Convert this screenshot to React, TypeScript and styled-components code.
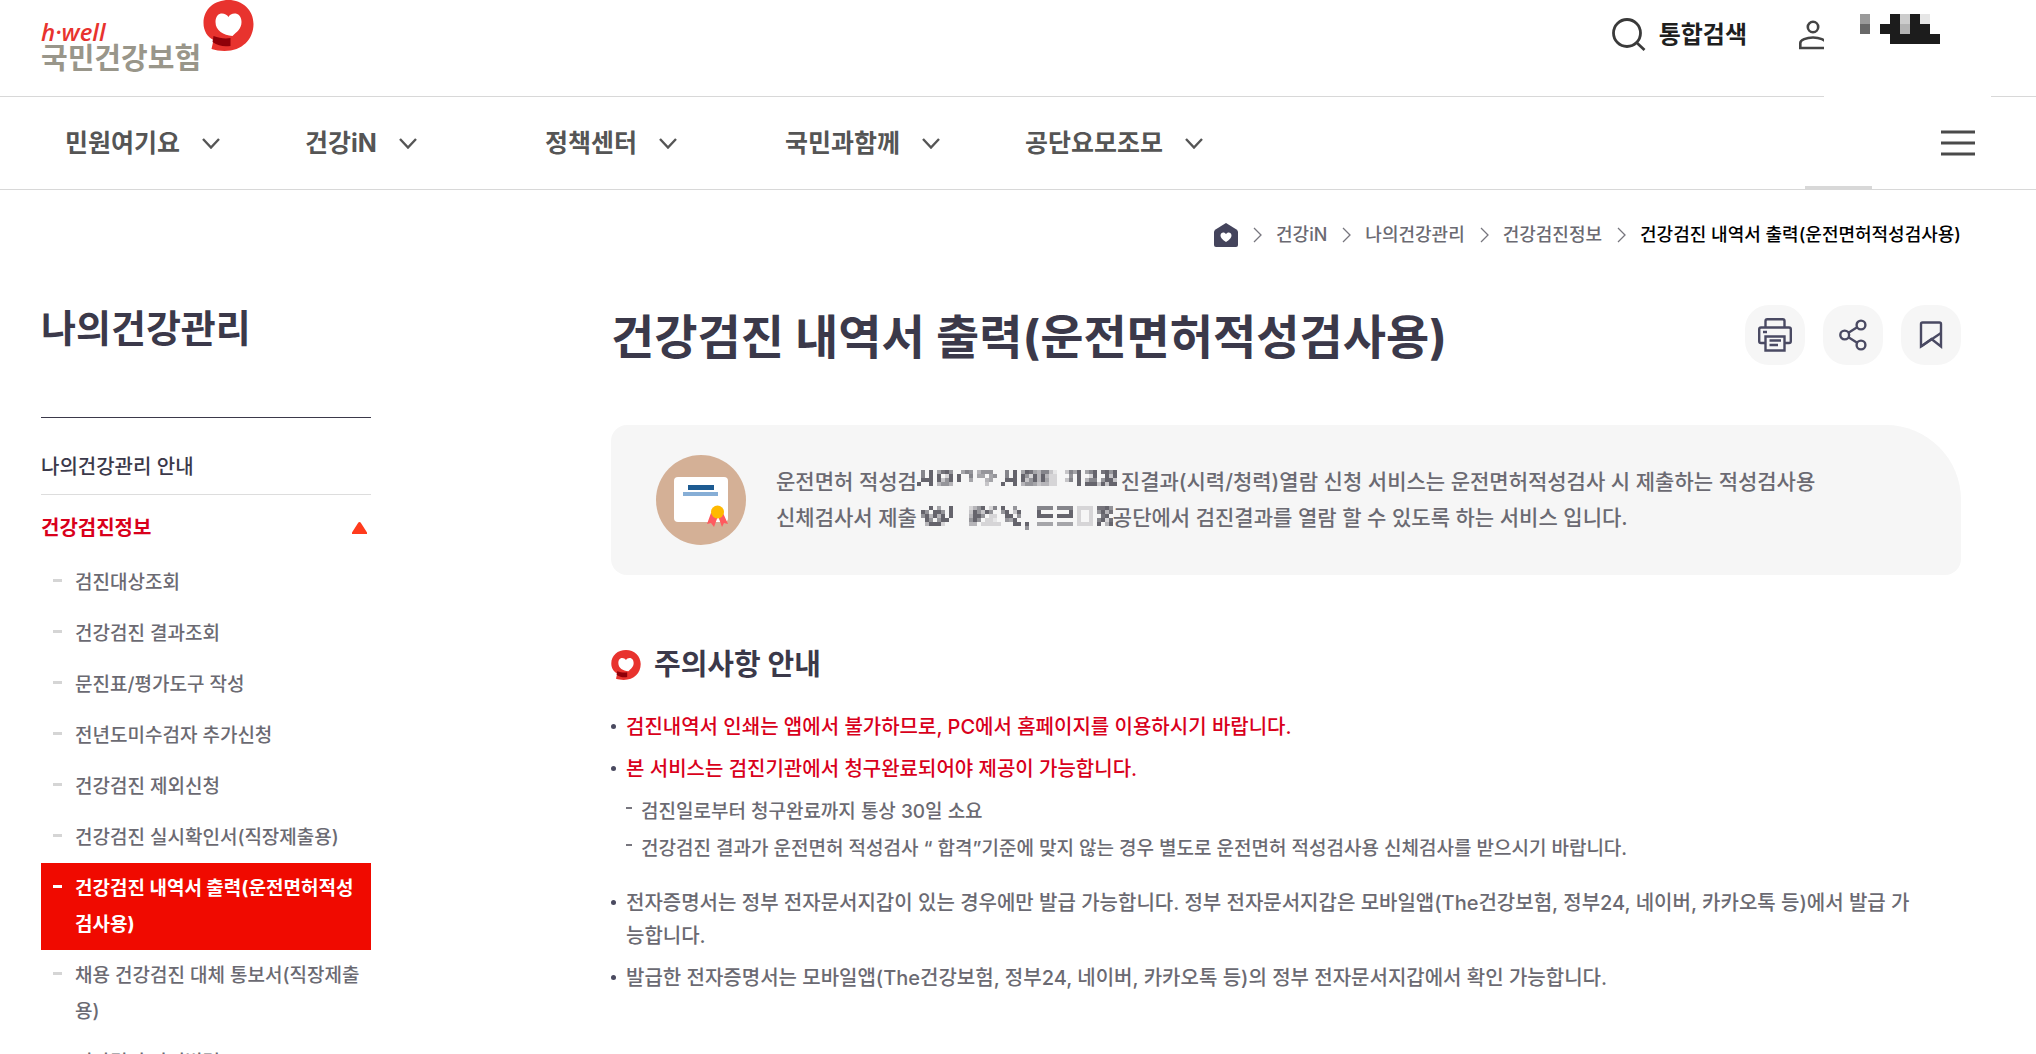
import React from 'react';
import styled, { createGlobalStyle } from 'styled-components';

const GlobalStyle = createGlobalStyle`
  html { scrollbar-width: none; }
  *, *::before, *::after { box-sizing: border-box; }
  body {
    margin: 0;
    background: #fff;
    color: #6b6a72;
    font-family: Inter, "Noto Sans CJK KR", sans-serif;
    font-weight: 500;
  }
  h1, h2, h3, p, ul, ol { margin: 0; padding: 0; font-weight: inherit; }
  ul, ol { list-style: none; }
  a { color: inherit; text-decoration: none; }
  button { font: inherit; color: inherit; padding: 0; border: 0; background: none; cursor: pointer; }
  svg { display: block; flex: none; }
`;

/* ---------- header ---------- */

const Header = styled.header`
  position: relative;
`;

const TopBar = styled.div`
  display: flex;
  justify-content: space-between;
  align-items: flex-start;
  height: 97px;
  padding: 0 209px 0 41px;
  border-bottom: 1px solid #d8d8d8;
`;

const LogoLink = styled.a`
  display: flex;
  align-items: flex-start;
  gap: 2px;
`;

const LogoWords = styled.span`
  display: flex;
  flex-direction: column;
  padding-top: 20px;
`;

const LogoTag = styled.span`
  font: italic 600 24px/24px "Open Sans", sans-serif;
  color: #e8332e;
`;

const LogoName = styled.span`
  font-size: 29px;
  line-height: 29px;
  font-weight: 700;
  color: #99968a;
`;

const Tools = styled.div`
  display: flex;
  align-items: center;
  gap: 52px;
  height: 69px;
`;

const ToolButton = styled.button`
  display: flex;
  align-items: center;
  gap: 13px;
  font-size: 24px;
  line-height: 36px;
  font-weight: 700;
  color: #1f1f1f;
`;

const UserCover = styled.div`
  position: absolute;
  top: 0;
  right: 45px;
  width: 167px;
  height: 100px;
  padding: 14px 0 0 36px;
  background: #fff;
`;

const NavBar = styled.nav`
  display: flex;
  align-items: center;
  justify-content: space-between;
  height: 93px;
  padding: 0 61px 0 65px;
  border-bottom: 1px solid #d8d8d8;
`;

const NavList = styled.ul`
  display: flex;
`;

const NavItem = styled.li`
  width: 240px;
`;

const NavButton = styled.button`
  display: flex;
  align-items: center;
  gap: 22px;
  font-size: 25px;
  line-height: 36px;
  font-weight: 700;
  color: #555;
`;

const NavThumb = styled.span`
  position: absolute;
  right: 164px;
  bottom: 1px;
  width: 67px;
  height: 3px;
  background: #d8d8d8;
`;

/* ---------- page ---------- */

const Breadcrumb = styled.ol`
  display: flex;
  justify-content: flex-end;
  align-items: center;
  gap: 15px;
  padding: 31px 75px 0 41px;
  font-size: 18px;
  line-height: 28px;
  color: #6b6a72;
`;

const Crumb = styled.li<{ $current?: boolean }>`
  display: flex;
  align-items: center;
  gap: 14px;
  color: ${(p) => (p.$current ? '#000' : 'inherit')};
`;

const Columns = styled.div`
  display: grid;
  grid-template-columns: 330px minmax(0, 1fr);
  column-gap: 240px;
  align-items: start;
  padding: 56px 75px 60px 41px;
`;

const SideTitle = styled.h2`
  padding-bottom: 65px;
  border-bottom: 1px solid #3b394a;
  font-size: 38px;
  line-height: 47px;
  font-weight: 700;
  color: #3b394a;
`;

const SideLink = styled.a`
  display: block;
  padding: 31px 0 9px;
  border-bottom: 1px solid #ddd;
  font-size: 20px;
  line-height: 36px;
  color: #3b394a;
`;

const SideToggle = styled.button`
  display: flex;
  width: 100%;
  align-items: center;
  justify-content: space-between;
  padding: 15px 4px 11px 0;
  font-size: 20px;
  line-height: 36px;
  font-weight: 700;
  color: #d9001b;
`;

const SubLink = styled.a<{ $active?: boolean }>`
  display: flex;
  align-items: flex-start;
  gap: 13px;
  padding: 8px 4px 7px 12px;
  font-size: 19px;
  line-height: 36px;
  font-weight: ${(p) => (p.$active ? 700 : 500)};
  color: ${(p) => (p.$active ? '#fff' : '#6b6a72')};
  background: ${(p) => (p.$active ? '#f00a00' : 'transparent')};

  &::before {
    content: '';
    flex: none;
    width: 9px;
    height: 3px;
    margin-top: 14px;
    background: ${(p) => (p.$active ? '#fff' : '#d5d5d5')};
  }
`;

const TitleRow = styled.div`
  display: flex;
  align-items: center;
  justify-content: space-between;
  height: 60px;
`;

const PageTitle = styled.h1`
  padding-top: 4px;
  font-size: 47px;
  line-height: 60px;
  font-weight: 700;
  color: #3b394a;
`;

const Actions = styled.div`
  display: flex;
  gap: 18px;
`;

const ActionButton = styled.button`
  display: flex;
  align-items: center;
  justify-content: center;
  width: 60px;
  height: 60px;
  border-radius: 24px;
  background: #f6f6f6;
`;

const InfoBox = styled.section`
  display: flex;
  align-items: center;
  gap: 30px;
  margin-top: 60px;
  padding: 30px 45px;
  border-radius: 16px 75px 16px 16px;
  background: #f6f6f6;
  font-size: 21px;
  line-height: 36px;
`;

const InfoLine = styled.p`
  display: flex;
  align-items: center;
  white-space: pre;
`;

const SectionTitle = styled.h2`
  display: flex;
  align-items: center;
  gap: 13px;
  margin-top: 70px;
  font-size: 29px;
  line-height: 40px;
  font-weight: 700;
  color: #3b394a;
`;

const NoticeList = styled.ul`
  display: flex;
  flex-direction: column;
  gap: 9px;
  margin-top: 26px;
`;

const Notice = styled.li<{ $alert?: boolean }>`
  display: grid;
  grid-template-columns: 15px minmax(0, 1fr);
  padding-right: 40px;
  font-size: 20px;
  line-height: 33px;
  color: ${(p) => (p.$alert ? '#d9001b' : 'inherit')};

  &::before {
    content: '';
    width: 5px;
    height: 5px;
    margin-top: 13px;
    border-radius: 50%;
    background: #4a4a60;
  }
`;

const SubNotices = styled.ul`
  display: flex;
  flex-direction: column;
  gap: 6px;
  grid-column: 2;
  padding: 10px 0 14px;
  color: #6b6a72;
`;

const SubNotice = styled.li`
  display: grid;
  grid-template-columns: 15px minmax(0, 1fr);
  font-size: 19px;
  line-height: 31px;

  &::before {
    content: '';
    width: 6px;
    height: 2px;
    margin-top: 11px;
    background: #77767e;
  }
`;

/* ---------- drawings ---------- */

const Balloon = ({ size }: { size: number }) => (
  <svg width={size} height={size} viewBox="0 0 50 51" aria-hidden="true">
    <path d="M25 0C39 0 50 10 50 24c0 15-11 27-29 27-5 0-9-1-13-2l2-9C4 37 0 31 0 23 0 9 11 0 25 0Z" fill="#e8332e" />
    <path d="M10 36c6 2 11 3 17 2v8c-7 1-12 0-18-4Z" fill="#8f0009" />
    <path d="M25 17c2-5 13-6 13 5 0 7-5 10-9 14-9-1-17-5-17-14 0-11 10-10 13-5Z" fill="#fff" />
  </svg>
);

const NavChevron = () => (
  <svg width="18" height="11" viewBox="0 0 18 11" fill="none" aria-hidden="true">
    <path d="m1 1 8 8.500L17 1" stroke="#555" strokeWidth="2.400" />
  </svg>
);

const CrumbChevron = () => (
  <svg width="9" height="16" viewBox="0 0 9 16" fill="none" aria-hidden="true">
    <path d="m1 1 7 7-7 7" stroke="#77767e" strokeWidth="1.300" />
  </svg>
);

const SearchIcon = () => (
  <svg width="34" height="34" viewBox="0 0 34 34" fill="none" stroke="#3a3a3a" strokeWidth="2.800" aria-hidden="true">
    <circle cx="15" cy="15" r="13.500" />
    <path d="m24 24 8.500 8" />
  </svg>
);

const PersonIcon = () => (
  <svg width="28" height="30" viewBox="0 0 28 30" fill="none" stroke="#444" strokeWidth="2.600" aria-hidden="true">
    <circle cx="14" cy="7" r="5.200" />
    <path d="M1.300 28v-5c0-3 6-5.500 12.700-5.500S26.700 20 26.700 23v5Z" />
  </svg>
);

const MenuIcon = () => (
  <svg width="34" height="26" viewBox="0 0 34 26" stroke="#4a4a4a" strokeWidth="3" aria-hidden="true">
    <path d="M0 2h34M0 13h34M0 24h34" />
  </svg>
);

const HomeIcon = () => (
  <svg width="24" height="24" viewBox="0 0 24 24" aria-hidden="true">
    <path d="M12 0 22.500 6.500Q24 7.500 24 9v13q0 2-2 2H2q-2 0-2-2V9q0-1.500 1.500-2.500Z" fill="#44445c" />
    <path d="M12 19c-4-2.500-5.500-4.500-5.500-6.500 0-3.500 4-4 5.500-1.500 1.500-2.500 5.500-2 5.500 1.500 0 2-1.500 4-5.500 6.500Z" fill="#fff" />
  </svg>
);

const PrintIcon = () => (
  <svg width="34" height="34" viewBox="0 0 34 34" fill="none" stroke="#4a4a63" strokeWidth="2.400" aria-hidden="true">
    <path d="M7.500 9.500V3q0-1.800 1.800-1.800h15.400q1.800 0 1.800 1.800v6.500" />
    <path d="M7.500 25H3q-1.800 0-1.800-1.800V11.300q0-1.800 1.800-1.800h28q1.800 0 1.800 1.800v11.900q0 1.800-1.800 1.800h-4.500" />
    <path d="M7.500 18.500h19v14h-19Z" />
    <path d="M5 14h4M11.500 22.500h11.500M11.500 27h8.500" />
  </svg>
);

const ShareIcon = () => (
  <svg width="28" height="32" viewBox="0 0 28 32" fill="none" stroke="#4a4a63" strokeWidth="2.400" aria-hidden="true">
    <circle cx="5.700" cy="16" r="4.400" />
    <circle cx="22" cy="6" r="4.400" />
    <circle cx="22" cy="26" r="4.400" />
    <path d="m9.500 13.700 9-5.600M9.500 18.300l9 5.600" />
  </svg>
);

const BookmarkIcon = () => (
  <svg width="24" height="28" viewBox="0 0 24 28" fill="none" stroke="#4a4a63" strokeWidth="2.400" aria-hidden="true">
    <path d="M2 25.500V3q0-1.500 1.500-1.500h17Q22 1.500 22 3v22.500l-9.500-7.500Z" />
    <path d="M2 25.500 22 12" />
  </svg>
);

const TriangleIcon = () => (
  <svg width="15" height="12" viewBox="0 0 15 12" aria-hidden="true">
    <path d="M7.500 0q.8 0 1.300.8L15 10.500V12H0v-1.500L6.200.8Q6.700 0 7.500 0Z" fill="#ff3b1d" />
  </svg>
);

const CertificateIcon = () => (
  <svg width="90" height="90" viewBox="0 0 90 90" aria-hidden="true">
    <circle cx="45" cy="45" r="45" fill="#d4b096" />
    <rect x="18" y="22" width="54" height="45" rx="4" fill="#fff" />
    <rect x="32" y="30" width="26" height="5" fill="#1d5b92" />
    <rect x="27" y="37" width="35" height="4" fill="#86aed6" />
    <path d="m55 58-4 11 4-1 3 4 4-11 4 11 2-4 4 1-5-11Z" fill="#ff5a5f" />
    <circle cx="61.500" cy="57" r="6.500" fill="#ffb900" />
  </svg>
);

/* Each character of a row is the darkness of one square, 0 being empty. */
const Mosaic = ({ rows, cell, ink }: { rows: string[]; cell: number; ink: string }) => (
  <svg width={rows[0].length * cell} height={rows.length * cell} shapeRendering="crispEdges" aria-hidden="true">
    {rows.flatMap((row, y) =>
      [...row].map((d, x) =>
        d === '0' ? null : (
          <rect key={`${x}-${y}`} x={x * cell} y={y * cell} width={cell} height={cell} fill={ink} opacity={Number(d) / 9} />
        ),
      ),
    )}
  </svg>
);

const USER_BLOCKS = ['40092910', '60993990', '00099999'];

const LINE_ONE = [
  '070905896005760466600070905985477310037590579089690',
  '070909029090070550560070909629494220006090029009390',
  '099909369090050004500099909369495220037090477069930',
  '900904664000000003000900904665344220000090999393990',
  '000000000000000000000000000000000000000000000000000',
  '000000000000000000000000000000000000000000000000000',
];

const LINE_TWO = [
  '0009050090000246902709006000007777077770222208896',
  '0960996090000396396006903900009000000090200206948',
  '0694949090000499602200990600009999099990200200890',
  '0096069900000696022100659000000000000000200207928',
  '0049992000000440222220009909005555055550222209049',
  '0000000000000000000000000006000000000000000000000',
];

/* ---------- data ---------- */

const NAV = ['민원여기요', '건강iN', '정책센터', '국민과함께', '공단요모조모'];
const CRUMBS = ['건강iN', '나의건강관리', '건강검진정보'];
const PAGE = '건강검진 내역서 출력(운전면허적성검사용)';
const SUB_MENU = [
  '검진대상조회',
  '건강검진 결과조회',
  '문진표/평가도구 작성',
  '전년도미수검자 추가신청',
  '건강검진 제외신청',
  '건강검진 실시확인서(직장제출용)',
  PAGE,
  '채용 건강검진 대체 통보서(직장제출용)',
  '건강검진 관련법령',
];

export default function App() {
  return (
    <>
      <GlobalStyle />
      <Header>
        <TopBar>
          <LogoLink href="#">
            <LogoWords>
              <LogoTag>h·well</LogoTag>
              <LogoName>국민건강보험</LogoName>
            </LogoWords>
            <Balloon size={51} />
          </LogoLink>
          <Tools>
            <ToolButton type="button">
              <SearchIcon />
              통합검색
            </ToolButton>
            <ToolButton type="button" aria-label="로그인 정보">
              <PersonIcon />
            </ToolButton>
          </Tools>
        </TopBar>
        <UserCover>
          <Mosaic rows={USER_BLOCKS} cell={10} ink="#1c1c1c" />
        </UserCover>
        <NavBar aria-label="주 메뉴">
          <NavList>
            {NAV.map((name) => (
              <NavItem key={name}>
                <NavButton type="button">
                  {name}
                  <NavChevron />
                </NavButton>
              </NavItem>
            ))}
          </NavList>
          <ToolButton type="button" aria-label="전체 메뉴">
            <MenuIcon />
          </ToolButton>
        </NavBar>
        <NavThumb />
      </Header>

      <Breadcrumb>
        <Crumb>
          <a href="#" aria-label="홈">
            <HomeIcon />
          </a>
        </Crumb>
        {CRUMBS.map((name) => (
          <Crumb key={name}>
            <CrumbChevron />
            <a href="#">{name}</a>
          </Crumb>
        ))}
        <Crumb $current>
          <CrumbChevron />
          {PAGE}
        </Crumb>
      </Breadcrumb>

      <Columns>
        <aside>
          <SideTitle>나의건강관리</SideTitle>
          <SideLink href="#">나의건강관리 안내</SideLink>
          <SideToggle type="button" aria-expanded="true">
            건강검진정보
            <TriangleIcon />
          </SideToggle>
          <ul>
            {SUB_MENU.map((name) => (
              <li key={name}>
                <SubLink href="#" $active={name === PAGE}>
                  {name}
                </SubLink>
              </li>
            ))}
          </ul>
        </aside>

        <main>
          <TitleRow>
            <PageTitle>{PAGE}</PageTitle>
            <Actions>
              <ActionButton type="button" aria-label="인쇄">
                <PrintIcon />
              </ActionButton>
              <ActionButton type="button" aria-label="공유">
                <ShareIcon />
              </ActionButton>
              <ActionButton type="button" aria-label="북마크">
                <BookmarkIcon />
              </ActionButton>
            </Actions>
          </TitleRow>

          <InfoBox>
            <CertificateIcon />
            <div>
              <InfoLine>
                운전면허 적성검
                <Mosaic rows={LINE_ONE} cell={4} ink="#65646c" />
                진결과(시력/청력)열람 신청 서비스는 운전면허적성검사 시 제출하는 적성검사용
              </InfoLine>
              <InfoLine>
                신체검사서 제출
                <Mosaic rows={LINE_TWO} cell={4} ink="#65646c" />
                공단에서 검진결과를 열람 할 수 있도록 하는 서비스 입니다.
              </InfoLine>
            </div>
          </InfoBox>

          <SectionTitle>
            <Balloon size={30} />
            주의사항 안내
          </SectionTitle>
          <NoticeList>
            <Notice $alert>검진내역서 인쇄는 앱에서 불가하므로, PC에서 홈페이지를 이용하시기 바랍니다.</Notice>
            <Notice $alert>
              본 서비스는 검진기관에서 청구완료되어야 제공이 가능합니다.
              <SubNotices>
                <SubNotice>검진일로부터 청구완료까지 통상 30일 소요</SubNotice>
                <SubNotice>
                  건강검진 결과가 운전면허 적성검사 “ 합격”기준에 맞지 않는 경우 별도로 운전면허 적성검사용 신체검사를 받으시기 바랍니다.
                </SubNotice>
              </SubNotices>
            </Notice>
            <Notice>
              전자증명서는 정부 전자문서지갑이 있는 경우에만 발급 가능합니다. 정부 전자문서지갑은 모바일앱(The건강보험, 정부24, 네이버, 카카오톡 등)에서 발급 가능합니다.
            </Notice>
            <Notice>
              발급한 전자증명서는 모바일앱(The건강보험, 정부24, 네이버, 카카오톡 등)의 정부 전자문서지갑에서 확인 가능합니다.
            </Notice>
          </NoticeList>
        </main>
      </Columns>
    </>
  );
}
